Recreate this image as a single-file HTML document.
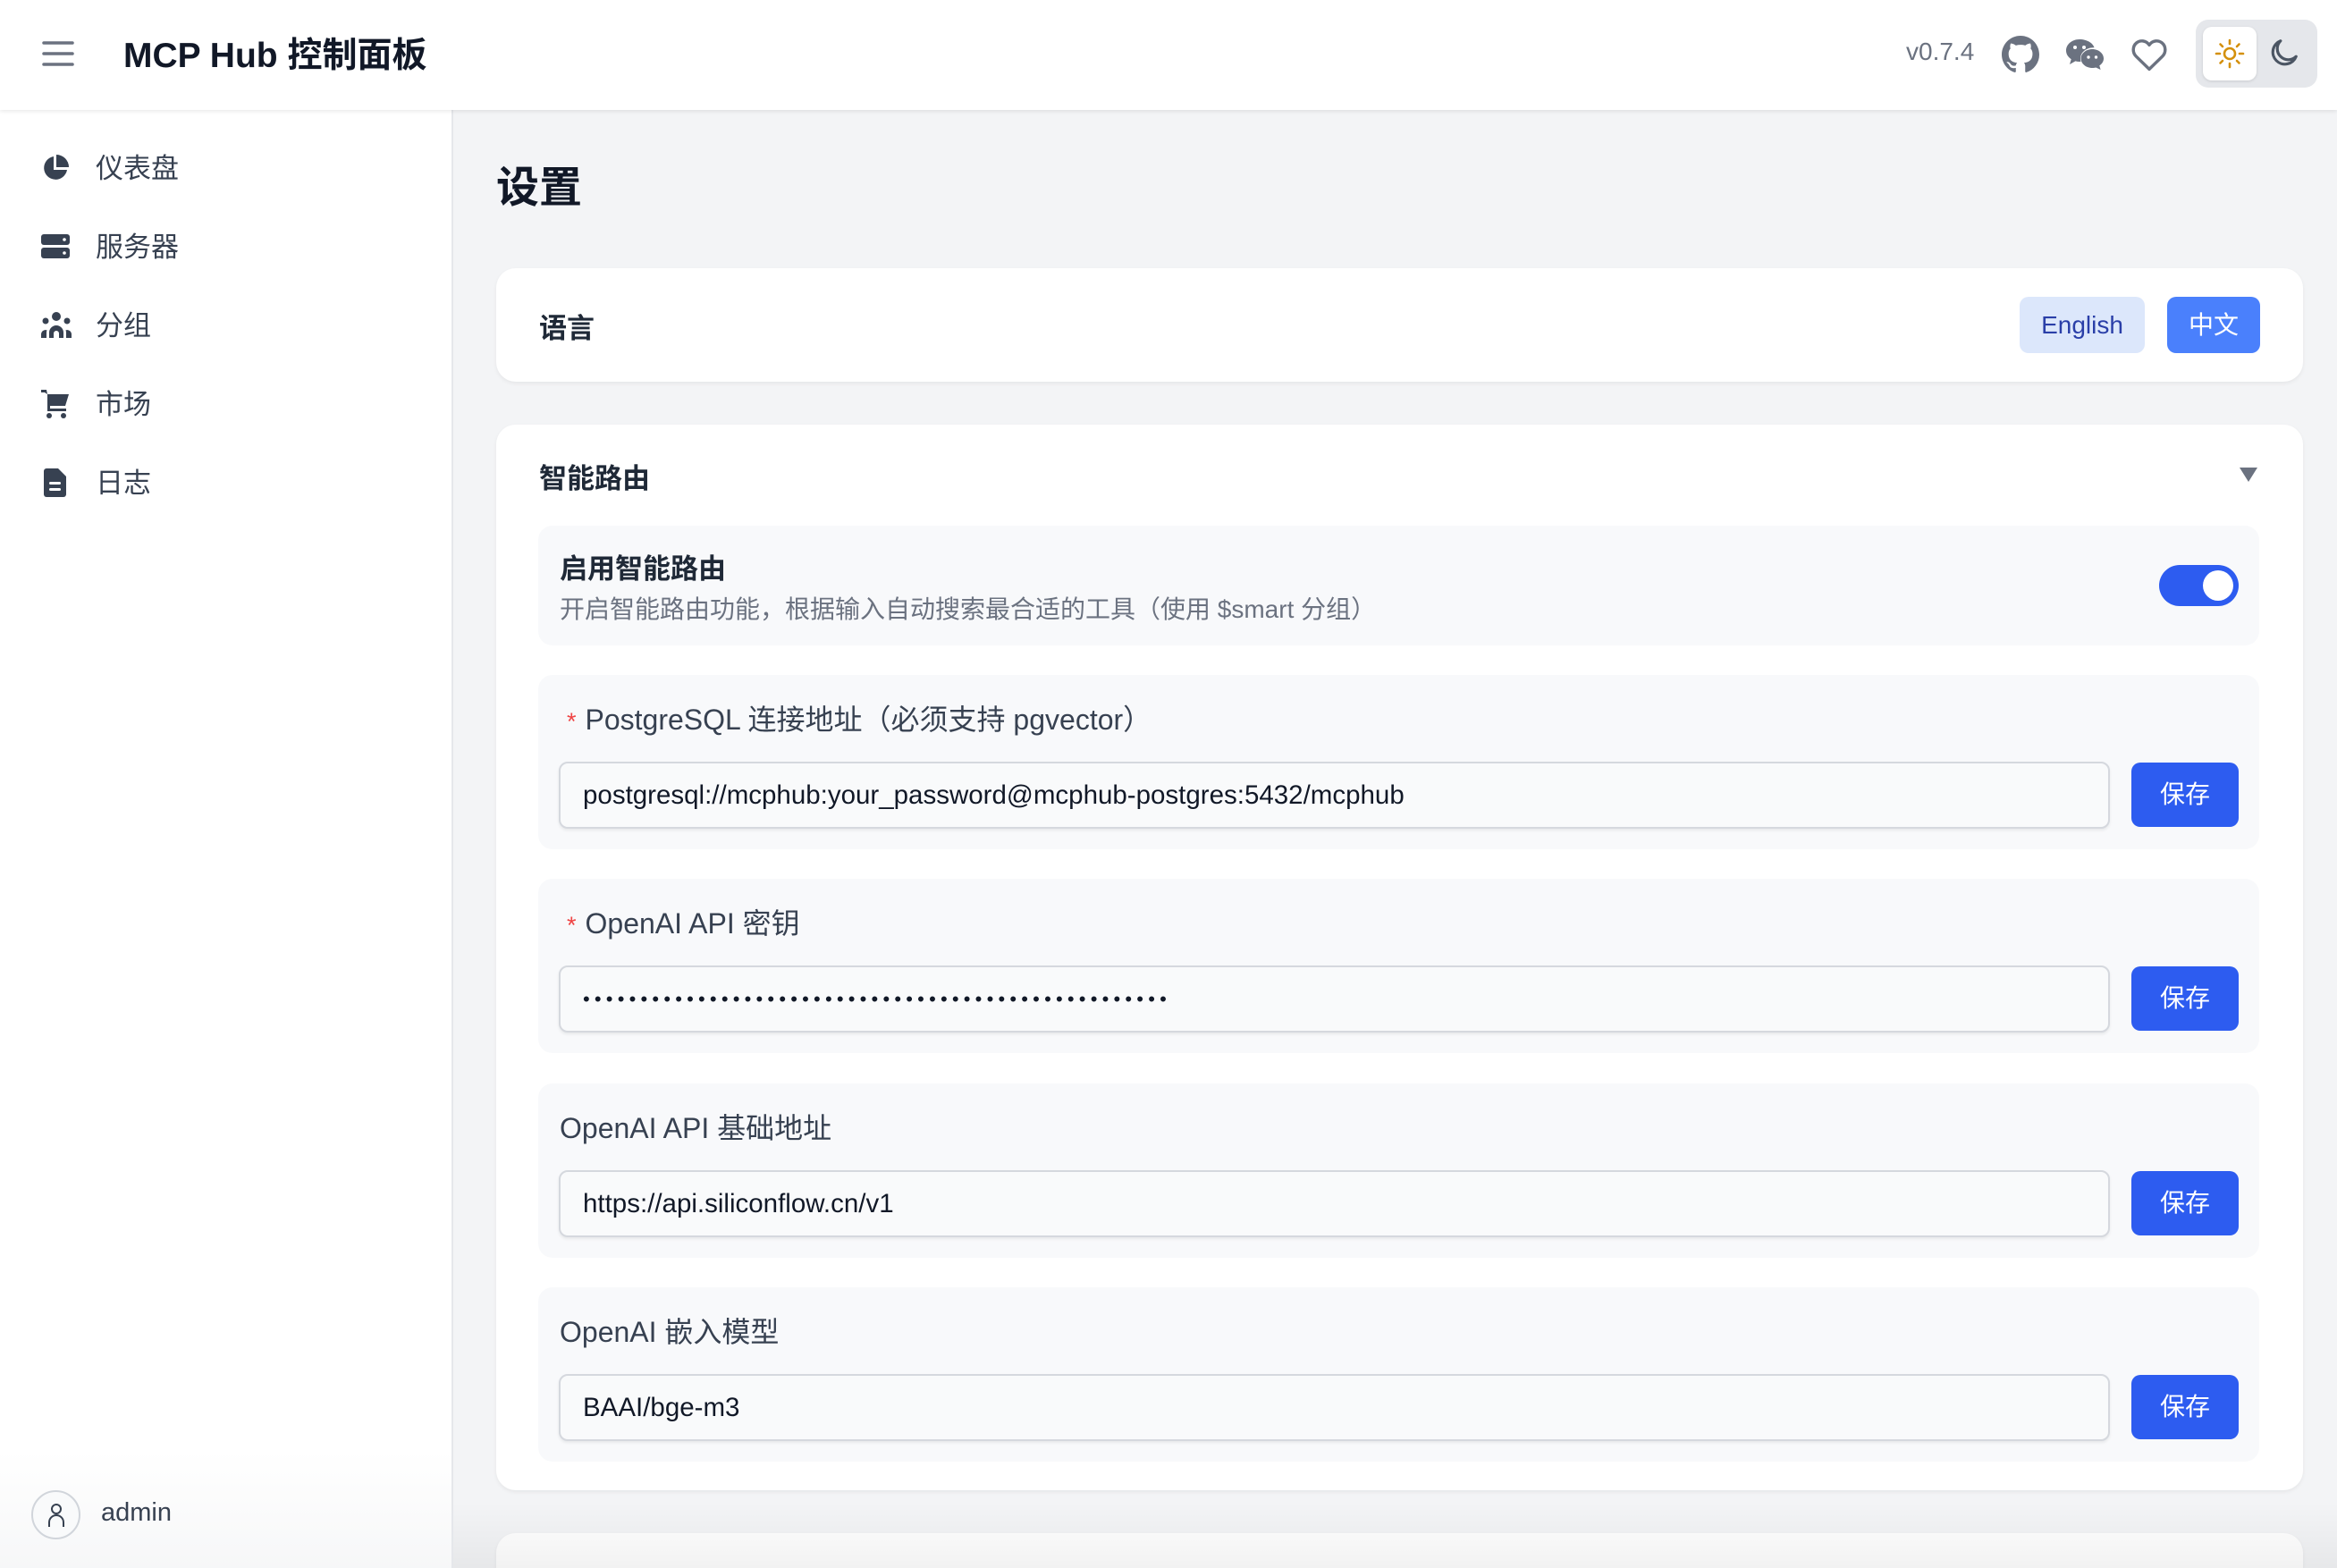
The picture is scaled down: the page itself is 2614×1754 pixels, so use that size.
<!DOCTYPE html>
<html style="overflow:hidden;height:1754px"><head><meta charset="utf-8"><style>
*{box-sizing:border-box;margin:0;padding:0}
body{width:2614px;height:1754px;overflow:hidden;background:#f3f4f6;font-family:"Liberation Sans","Noto Sans CJK SC",sans-serif;position:relative}
.hdr{position:absolute;left:0;top:0;width:2614px;height:123px;background:#fff;box-shadow:0 2px 4px rgba(0,0,0,.08);z-index:3}
.side{position:absolute;left:0;top:123px;width:507px;height:1631px;background:#fff;border-right:2px solid #e5e7eb;z-index:2}
.abs{position:absolute}
.nav{position:absolute;left:0;height:60px;display:flex;align-items:center}
.nav svg{position:absolute;left:46px}
.nav span{position:absolute;left:107px;font-size:31px;color:#374151;white-space:nowrap;line-height:1}
.card{position:absolute;left:555px;width:2021px;background:#fff;border-radius:22px;box-shadow:0 2px 5px rgba(0,0,0,.06)}
.blk{position:absolute;left:47px;width:1925px;background:#f8f9fb;border-radius:16px}
.lbl{position:absolute;left:24px;top:25px;font-size:32px;color:#374151;white-space:nowrap}
.lbl b{color:#ef4444;font-weight:400;margin-right:10px;font-size:27px;margin-left:8px}
.inp{position:absolute;left:23px;top:97px;width:1735px;height:75px;border:2px solid #d5d8de;border-radius:10px;background:#f9fafb;box-shadow:0 2px 3px rgba(0,0,0,.07);font-size:29.5px;color:#111827;padding-left:25px;line-height:71px;white-space:nowrap}
.save{position:absolute;left:1782px;top:98px;width:120px;height:72px;background:#2d5cf0;border-radius:10px;color:#fff;font-size:28px;text-align:center;line-height:72px}
</style></head><body>
<div class="hdr">
 <svg class="abs" style="left:46px;top:44px" width="38" height="32" viewBox="0 0 38 32"><g stroke="#6b7280" stroke-width="3.5" stroke-linecap="round"><line x1="3" y1="4" x2="35" y2="4"/><line x1="3" y1="16" x2="35" y2="16"/><line x1="3" y1="28" x2="35" y2="28"/></g></svg>
 <div class="abs" style="left:138px;top:31px;font-size:39px;font-weight:700;color:#111827;white-space:nowrap">MCP Hub 控制面板</div>
 <div class="abs" style="left:2132px;top:42px;font-size:28px;color:#6b7280">v0.7.4</div>
 <svg class="abs" style="left:2239px;top:40px" width="42" height="42" viewBox="0 0 16 16"><path fill="#6b7280" d="M8 0C3.58 0 0 3.580 0 8c0 3.54 2.29 6.53 5.470 7.59.4.07.55-.17.55-.38 0-.19-.01-.82-.01-1.49-2.01.37-2.53-.49-2.690-.94-.09-.23-.48-.94-.82-1.13-.28-.15-.68-.52-.01-.53.63-.01 1.080.58 1.230.82.72 1.21 1.870.87 2.330.66.07-.52.28-.87.51-1.07-1.78-.2-3.64-.89-3.64-3.95 0-.87.31-1.59.82-2.15-.08-.2-.36-1.02.08-2.12 0 0 .67-.21 2.2.82.64-.18 1.32-.27 2-.27.68 0 1.36.09 2 .27 1.53-1.04 2.2-.82 2.2-.82.44 1.1.16 1.92.08 2.12.51.56.82 1.27.82 2.15 0 3.07-1.87 3.75-3.65 3.95.29.25.54.73.54 1.48 0 1.07-.01 1.93-.01 2.2 0 .21.15.46.55.38A8.013 8.013 0 0016 8c0-4.42-3.58-8-8-8z"/></svg>
 <svg class="abs" style="left:2310px;top:42px" width="44" height="38" viewBox="0 0 44 38"><path fill="#6b7280" d="M16 2C7.7 2 1 7.6 1 14.5c0 4 2.2 7.4 5.7 9.7L5 30l6.4-3.6c1.5.4 3 .6 4.6.6.5 0 1 0 1.5-.1-.4-1.100-.5-2.300-.5-3.400 0-6.8 6.5-12.3 14.5-12.3h1C31 6.1 24.2 2 16 2z"/><path fill="#6b7280" d="M43 23.5c0-5.8-5.7-10.5-12.7-10.5S17.6 17.7 17.6 23.5 23.3 34 30.3 34c1.4 0 2.8-.2 4-.5L39.6 36l-1.3-4.6c2.9-1.9 4.7-4.8 4.7-7.9z"/><circle cx="11" cy="11" r="2" fill="#fff"/><circle cx="21" cy="11" r="2" fill="#fff"/><circle cx="26" cy="22" r="1.7" fill="#fff"/><circle cx="34.5" cy="22" r="1.7" fill="#fff"/></svg>
 <svg class="abs" style="left:2383px;top:42px" width="42" height="38" viewBox="0 0 24 22"><path fill="none" stroke="#6b7280" stroke-width="2" stroke-linejoin="round" d="M12 20.5 3.5 12.2C1 9.7 1.1 5.6 3.8 3.4 6.2 1.5 9.7 1.9 11.6 4.3L12 4.8l.4-.5c1.9-2.4 5.4-2.8 7.8-.9 2.7 2.2 2.8 6.3.3 8.8z"/></svg>
 <div class="abs" style="left:2456px;top:22px;width:136px;height:76px;background:#e5e7eb;border-radius:14px"></div>
 <div class="abs" style="left:2464px;top:30px;width:60px;height:60px;background:#fff;border-radius:10px;box-shadow:0 1px 3px rgba(0,0,0,.12)"></div>
 <svg class="abs" style="left:2477px;top:43px" width="34" height="34" viewBox="0 0 34 34"><g stroke="#d4900b" stroke-width="2.6" stroke-linecap="round" fill="none"><circle cx="17" cy="17" r="6"/><line x1="17" y1="2" x2="17" y2="6"/><line x1="17" y1="28" x2="17" y2="32"/><line x1="2" y1="17" x2="6" y2="17"/><line x1="28" y1="17" x2="32" y2="17"/><line x1="6.5" y1="6.5" x2="9" y2="9"/><line x1="25" y1="25" x2="27.5" y2="27.5"/><line x1="6.5" y1="27.5" x2="9" y2="25"/><line x1="25" y1="9" x2="27.5" y2="6.5"/></g></svg>
 <svg class="abs" style="left:2535px;top:41px" width="38" height="38" viewBox="0 0 24 24"><path fill="none" stroke="#4b5563" stroke-width="2" stroke-linecap="round" stroke-linejoin="round" d="M10 3a8.5 8.5 0 1 0 11 11A7 7 0 0 1 10 3z"/></svg>
</div>

<div class="side">
 <div class="nav" style="top:35px"><svg width="32" height="32" viewBox="0 0 32 32"><path fill="#374151" d="M14 3A13 13 0 1 0 29 18H14z"/><path fill="#374151" d="M17 1v14h14A14 14 0 0 0 17 1z"/></svg><span>仪表盘</span></div>
 <div class="nav" style="top:123px"><svg width="32" height="32" viewBox="0 0 32 32"><rect x="0" y="2" width="32" height="12" rx="3" fill="#374151"/><rect x="0" y="17" width="32" height="12" rx="3" fill="#374151"/><circle cx="26" cy="8" r="1.8" fill="#fff"/><circle cx="26" cy="23" r="1.8" fill="#fff"/></svg><span>服务器</span></div>
 <div class="nav" style="top:211px"><svg width="34" height="32" viewBox="0 0 34 32"><g fill="#374151"><circle cx="17" cy="6" r="5"/><circle cx="5" cy="11" r="3.5"/><circle cx="29" cy="11" r="3.5"/><path d="M9 30v-6a8 8 0 0 1 16 0v6h-5v-5a3 3 0 0 0-6 0v5z"/><path d="M0 30v-4a5 5 0 0 1 6.5-4.7A10 10 0 0 0 6 24v6z"/><path d="M34 30v-4a5 5 0 0 0-6.5-4.7A10 10 0 0 1 28 24v6z"/></g></svg><span>分组</span></div>
 <div class="nav" style="top:299px"><svg width="32" height="34" viewBox="0 0 32 34"><g fill="#374151"><path d="M0 1h6l1 5h24l-4 13H10v3h18v3H7V6L4 4H0z"/><circle cx="9" cy="30" r="3"/><circle cx="25" cy="30" r="3"/></g></svg><span>市场</span></div>
 <div class="nav" style="top:387px"><svg width="32" height="32" viewBox="0 0 32 32"><path fill="#374151" d="M6 0h13l9 9v20a3 3 0 0 1-3 3H6a3 3 0 0 1-3-3V3a3 3 0 0 1 3-3z"/><rect x="9" y="15" width="13" height="3" rx="1.5" fill="#fff"/><rect x="9" y="22" width="13" height="3" rx="1.5" fill="#fff"/></svg><span>日志</span></div>
 <div class="abs" style="left:0;top:1500px;width:505px;height:131px;background:linear-gradient(180deg,rgba(255,255,255,0),rgba(238,239,241,.5))"></div>
 <div class="abs" style="left:35px;top:1544px;width:55px;height:55px;border-radius:50%;border:2px solid #d1d5db;background:#f9fafb"></div>
 <svg class="abs" style="left:50px;top:1557px" width="26" height="30" viewBox="0 0 26 30"><g fill="none" stroke="#374151" stroke-width="2"><circle cx="13" cy="8" r="5"/><path d="M5 28v-5a8 8 0 0 1 16 0v5"/></g></svg>
 <div class="abs" style="left:113px;top:1553px;font-size:29px;color:#374151">admin</div>
</div>

<div class="abs" style="left:555px;top:170px;font-size:48px;font-weight:700;color:#111827">设置</div>

<div class="card" style="top:300px;height:127px">
 <div class="abs" style="left:48px;top:42px;font-size:31px;font-weight:700;color:#1f2937">语言</div>
 <div class="abs" style="left:1704px;top:32px;width:140px;height:63px;background:#dce7fb;border-radius:10px;color:#2a3fa8;font-size:28px;text-align:center;line-height:63px">English</div>
 <div class="abs" style="left:1869px;top:32px;width:104px;height:63px;background:#4a80fc;border-radius:10px;color:#fff;font-size:28px;text-align:center;line-height:63px">中文</div>
</div>

<div class="card" style="top:475px;height:1192px">
 <div class="abs" style="left:48px;top:35px;font-size:31px;font-weight:700;color:#1f2937">智能路由</div>
 <svg class="abs" style="left:1950px;top:47px" width="20" height="18" viewBox="0 0 20 18"><path d="M0 1h20L10 17z" fill="#6b7280"/></svg>
 <div class="blk" style="top:113px;height:134px">
  <div class="abs" style="left:24px;top:23px;font-size:31px;font-weight:700;color:#1f2937">启用智能路由</div>
  <div class="abs" style="left:24px;top:72px;font-size:28px;color:#6b7280;white-space:nowrap">开启智能路由功能，根据输入自动搜索最合适的工具（使用 $smart 分组）</div>
  <div class="abs" style="left:1813px;top:44px;width:89px;height:46px;background:#2d5cf0;border-radius:23px"></div>
  <div class="abs" style="left:1862px;top:50px;width:34px;height:34px;background:#fff;border-radius:50%"></div>
 </div>
 <div class="blk" style="top:280px;height:195px">
  <div class="lbl"><b>*</b>PostgreSQL 连接地址（必须支持 pgvector）</div>
  <div class="inp">postgresql://mcphub:your_password@mcphub-postgres:5432/mcphub</div>
  <div class="save">保存</div>
 </div>
 <div class="blk" style="top:508px;height:195px">
  <div class="lbl"><b>*</b>OpenAI API 密钥</div>
  <div class="inp" style="font-size:22px;letter-spacing:5.2px">•••••••••••••••••••••••••••••••••••••••••••••••••••</div>
  <div class="save">保存</div>
 </div>
 <div class="blk" style="top:737px;height:195px">
  <div class="lbl">OpenAI API 基础地址</div>
  <div class="inp">https://api.siliconflow.cn/v1</div>
  <div class="save">保存</div>
 </div>
 <div class="blk" style="top:965px;height:195px">
  <div class="lbl">OpenAI 嵌入模型</div>
  <div class="inp">BAAI/bge-m3</div>
  <div class="save">保存</div>
 </div>
</div>

<div class="card" style="top:1715px;height:39px;border-radius:22px 22px 0 0"></div>
<div class="abs" style="left:507px;top:1680px;width:2107px;height:74px;background:linear-gradient(180deg,rgba(0,0,0,0),rgba(0,0,0,.05));z-index:1"></div>
</body></html>
